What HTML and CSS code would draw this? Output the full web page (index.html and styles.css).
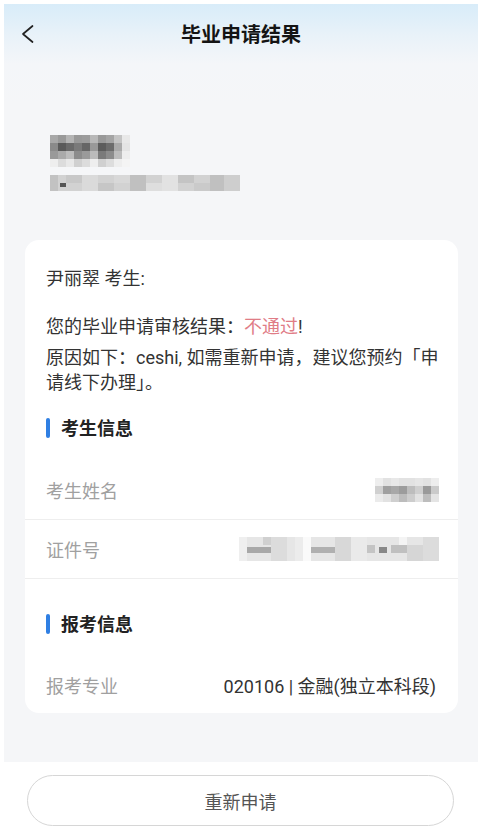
FILE: index.html
```html
<!DOCTYPE html>
<html lang="zh-CN">
<head>
<meta charset="utf-8">
<title>毕业申请结果</title>
<link rel="stylesheet" href="styles.css">
</head>
<body>
<div class="frame">
  <header class="nav">
    <span class="back">
      <svg width="16" height="22" viewBox="0 0 16 22"><path d="M12.5 3 L3 11 L12.5 19" fill="none" stroke="#222" stroke-width="1.7" stroke-linecap="round" stroke-linejoin="round"/></svg>
    </span>
    <h1 class="title">毕业申请结果</h1>
    <span></span>
  </header>

  <section class="profile">
    <svg class="mosaic" width="80" height="32" viewBox="0 0 80 32">
      <rect x="0" y="0" width="8" height="8" fill="#a8a8a8"/><rect x="8" y="0" width="8" height="8" fill="#999"/><rect x="16" y="0" width="8" height="8" fill="#b4b4b4"/><rect x="24" y="0" width="8" height="8" fill="#999"/><rect x="32" y="0" width="8" height="8" fill="#9c9c9c"/><rect x="40" y="0" width="8" height="8" fill="#b8b8b8"/><rect x="48" y="0" width="8" height="8" fill="#999"/><rect x="56" y="0" width="8" height="8" fill="#a4a4a4"/><rect x="64" y="0" width="8" height="8" fill="#c4c4c4"/><rect x="72" y="0" width="8" height="8" fill="#e8e8e8"/>
      <rect x="0" y="8" width="8" height="8" fill="#8a8a8a"/><rect x="8" y="8" width="8" height="8" fill="#5a5a5a"/><rect x="16" y="8" width="8" height="8" fill="#6a6a6a"/><rect x="24" y="8" width="8" height="8" fill="#7a7a7a"/><rect x="32" y="8" width="8" height="8" fill="#666"/><rect x="40" y="8" width="8" height="8" fill="#999"/><rect x="48" y="8" width="8" height="8" fill="#5c5c5c"/><rect x="56" y="8" width="8" height="8" fill="#6c6c6c"/><rect x="64" y="8" width="8" height="8" fill="#aaa"/><rect x="72" y="8" width="8" height="8" fill="#e4e4e4"/>
      <rect x="0" y="16" width="8" height="8" fill="#999"/><rect x="8" y="16" width="8" height="8" fill="#aaa"/><rect x="16" y="16" width="8" height="8" fill="#bcbcbc"/><rect x="24" y="16" width="8" height="8" fill="#8c8c8c"/><rect x="32" y="16" width="8" height="8" fill="#9a9a9a"/><rect x="40" y="16" width="8" height="8" fill="#bbb"/><rect x="48" y="16" width="8" height="8" fill="#7a7a7a"/><rect x="56" y="16" width="8" height="8" fill="#8c8c8c"/><rect x="64" y="16" width="8" height="8" fill="#bdbdbd"/><rect x="72" y="16" width="8" height="8" fill="#eee"/>
      <rect x="0" y="24" width="8" height="8" fill="#eee"/><rect x="8" y="24" width="8" height="8" fill="#dcdcdc"/><rect x="16" y="24" width="8" height="8" fill="#e8e8e8"/><rect x="24" y="24" width="8" height="8" fill="#d0d0d0"/><rect x="32" y="24" width="8" height="8" fill="#dcdcdc"/><rect x="40" y="24" width="8" height="8" fill="#eee"/><rect x="48" y="24" width="8" height="8" fill="#d0d0d0"/><rect x="56" y="24" width="8" height="8" fill="#ddd"/><rect x="64" y="24" width="8" height="8" fill="#eee"/><rect x="72" y="24" width="8" height="8" fill="#f4f4f4"/>
    </svg>
    <svg class="mosaic" width="190" height="16" viewBox="0 0 190 16">
      <rect x="0" y="0" width="190" height="16" fill="#d2d2d2"/>
      <rect x="0" y="0" width="8" height="16" fill="#c2c2c2"/><rect x="10" y="8" width="6" height="4" fill="#555"/><rect x="16" y="0" width="16" height="8" fill="#c8c8c8"/><rect x="32" y="0" width="16" height="16" fill="#dadada"/><rect x="48" y="8" width="16" height="8" fill="#c6c6c6"/><rect x="64" y="0" width="16" height="8" fill="#d8d8d8"/><rect x="80" y="0" width="16" height="16" fill="#c0c0c0"/><rect x="96" y="8" width="16" height="8" fill="#dedede"/><rect x="112" y="0" width="16" height="16" fill="#e2e2e2"/><rect x="128" y="0" width="16" height="8" fill="#c4c4c4"/><rect x="144" y="8" width="16" height="8" fill="#cacaca"/><rect x="160" y="0" width="14" height="16" fill="#c0c0c0"/><rect x="174" y="0" width="16" height="16" fill="#cecece"/>
    </svg>
  </section>

  <main class="card">
    <p class="line greet">尹丽翠 考生:</p>
    <p class="line result">您的毕业申请审核结果：<span class="fail">不通过</span>!</p>
    <p class="line reason">原因如下：ceshi, 如需重新申请，建议您预约「申请线下办理」。</p>

    <h2 class="sec sec-first">考生信息</h2>
    <div class="row">
      <span class="label">考生姓名</span>
      <svg class="mosaic" width="64" height="24" viewBox="0 0 64 24">
        <rect x="0" y="0" width="64" height="24" fill="#e2e2e2"/>
        <rect x="0" y="0" width="8" height="8" fill="#eee"/><rect x="16" y="0" width="8" height="8" fill="#e8e8e8"/><rect x="40" y="0" width="8" height="8" fill="#e6e6e6"/><rect x="56" y="0" width="8" height="8" fill="#ededed"/>
        <rect x="0" y="8" width="8" height="8" fill="#d0d0d0"/><rect x="8" y="8" width="8" height="8" fill="#a0a0a0"/><rect x="16" y="8" width="8" height="8" fill="#a8a8a8"/><rect x="24" y="8" width="8" height="8" fill="#9c9c9c"/><rect x="32" y="8" width="8" height="8" fill="#bdbdbd"/><rect x="40" y="8" width="8" height="8" fill="#cfcfcf"/><rect x="48" y="8" width="8" height="8" fill="#9a9a9a"/><rect x="56" y="8" width="8" height="8" fill="#cacaca"/>
        <rect x="0" y="16" width="8" height="8" fill="#ebebeb"/><rect x="16" y="16" width="8" height="8" fill="#cfcfcf"/><rect x="24" y="16" width="8" height="8" fill="#bcbcbc"/><rect x="32" y="16" width="8" height="8" fill="#cdcdcd"/><rect x="48" y="16" width="8" height="8" fill="#bdbdbd"/><rect x="56" y="16" width="8" height="8" fill="#e4e4e4"/>
      </svg>
    </div>
    <div class="row">
      <span class="label">证件号</span>
      <svg class="mosaic" width="200" height="24" viewBox="0 0 200 24">
        <rect x="0" y="0" width="200" height="24" fill="#e6e6e6"/>
        <rect x="0" y="0" width="8" height="24" fill="#efefef"/><rect x="8" y="10" width="24" height="6" fill="#a8a8a8"/><rect x="24" y="0" width="8" height="8" fill="#d0d0d0"/><rect x="32" y="0" width="16" height="24" fill="#dcdcdc"/><rect x="56" y="0" width="8" height="24" fill="#ececec"/><rect x="64" y="0" width="8" height="24" fill="#fafafa"/><rect x="72" y="10" width="24" height="6" fill="#b0b0b0"/><rect x="96" y="0" width="16" height="24" fill="#d8d8d8"/><rect x="112" y="0" width="16" height="24" fill="#eaeaea"/><rect x="128" y="8" width="8" height="8" fill="#c4c4c4"/><rect x="140" y="10" width="8" height="6" fill="#888"/><rect x="152" y="8" width="16" height="8" fill="#c0c0c0"/><rect x="160" y="0" width="8" height="8" fill="#f4f4f4"/><rect x="168" y="8" width="16" height="16" fill="#d6d6d6"/><rect x="184" y="0" width="16" height="24" fill="#dcdcdc"/>
      </svg>
    </div>

    <h2 class="sec sec-next">报考信息</h2>
    <div class="row row-last">
      <span class="label">报考专业</span>
      <span class="value">020106 | 金融(独立本科段)</span>
    </div>
  </main>
</div>

<footer class="footer">
  <button class="btn" type="button">重新申请</button>
</footer>
</body>
</html>
```

FILE: styles.css
```css
* {
  box-sizing: border-box;
}

html, body {
  margin: 0;
  background: #ffffff;
}

body {
  padding: 4px 4px 0;
  font-family: "Roboto", "Noto Sans CJK SC", sans-serif;
  color: #333333;
}

.frame {
  background: linear-gradient(180deg, #d8ecf9 0px, #e9f2f9 32px, #f4f6f9 60px, #f5f6f8 100px);
  padding-bottom: 49px;
}

.nav {
  height: 59px;
  display: grid;
  grid-template-columns: 1fr auto 1fr;
  align-items: center;
}

.back {
  display: flex;
  align-items: center;
  padding-left: 16px;
}

.back svg {
  display: block;
}

.title {
  margin: 0;
  font-size: 20px;
  line-height: 26px;
  font-weight: 700;
  color: #141414;
  font-family: "Noto Sans CJK SC", sans-serif;
}

.profile {
  padding: 72px 0 0 46px;
  display: flex;
  flex-direction: column;
  align-items: flex-start;
  gap: 8px;
  height: 177px;
}

.mosaic {
  display: block;
  filter: blur(0.7px);
}

.card {
  margin: 0 20px 0 21px;
  background: #ffffff;
  border-radius: 14px;
  padding-top: 26px;
  overflow: hidden;
}

.line {
  margin: 0;
  padding: 0 12px 0 21px;
  font-size: 18px;
  line-height: 25px;
  color: #333333;
}

.greet {
  margin-bottom: 23px;
}

.result {
  margin-bottom: 6px;
}

.fail {
  color: #e07c86;
}

.sec {
  margin: 0;
  padding-left: 21px;
  display: flex;
  align-items: center;
  gap: 11px;
  font-size: 18px;
  line-height: 25px;
  font-weight: 700;
  color: #222222;
  font-family: "Noto Sans CJK SC", sans-serif;
}

.sec::before {
  content: "";
  width: 4px;
  height: 20px;
  border-radius: 2px;
  background: #2f7fe3;
}

.sec-first {
  margin-top: 20px;
  margin-bottom: 21px;
}

.sec-next {
  margin-top: 32px;
  margin-bottom: 21px;
}

.row {
  height: 59px;
  padding: 0 19px 0 21px;
  display: flex;
  align-items: center;
  justify-content: space-between;
  border-bottom: 1px solid #eeeeee;
}

.row-last {
  height: 56px;
  border-bottom: none;
  padding-right: 22px;
}

.label {
  font-size: 18px;
  color: #a0a0a0;
}

.value {
  font-size: 18px;
  color: #333333;
}

.footer {
  padding: 13px 0 0 23px;
}

.btn {
  width: 427px;
  height: 51px;
  border: 1.5px solid #d6d6d6;
  border-radius: 26px;
  background: #ffffff;
  font-family: "Noto Sans CJK SC", sans-serif;
  font-size: 18px;
  color: #555555;
  padding: 0;
  display: block;
}
```
